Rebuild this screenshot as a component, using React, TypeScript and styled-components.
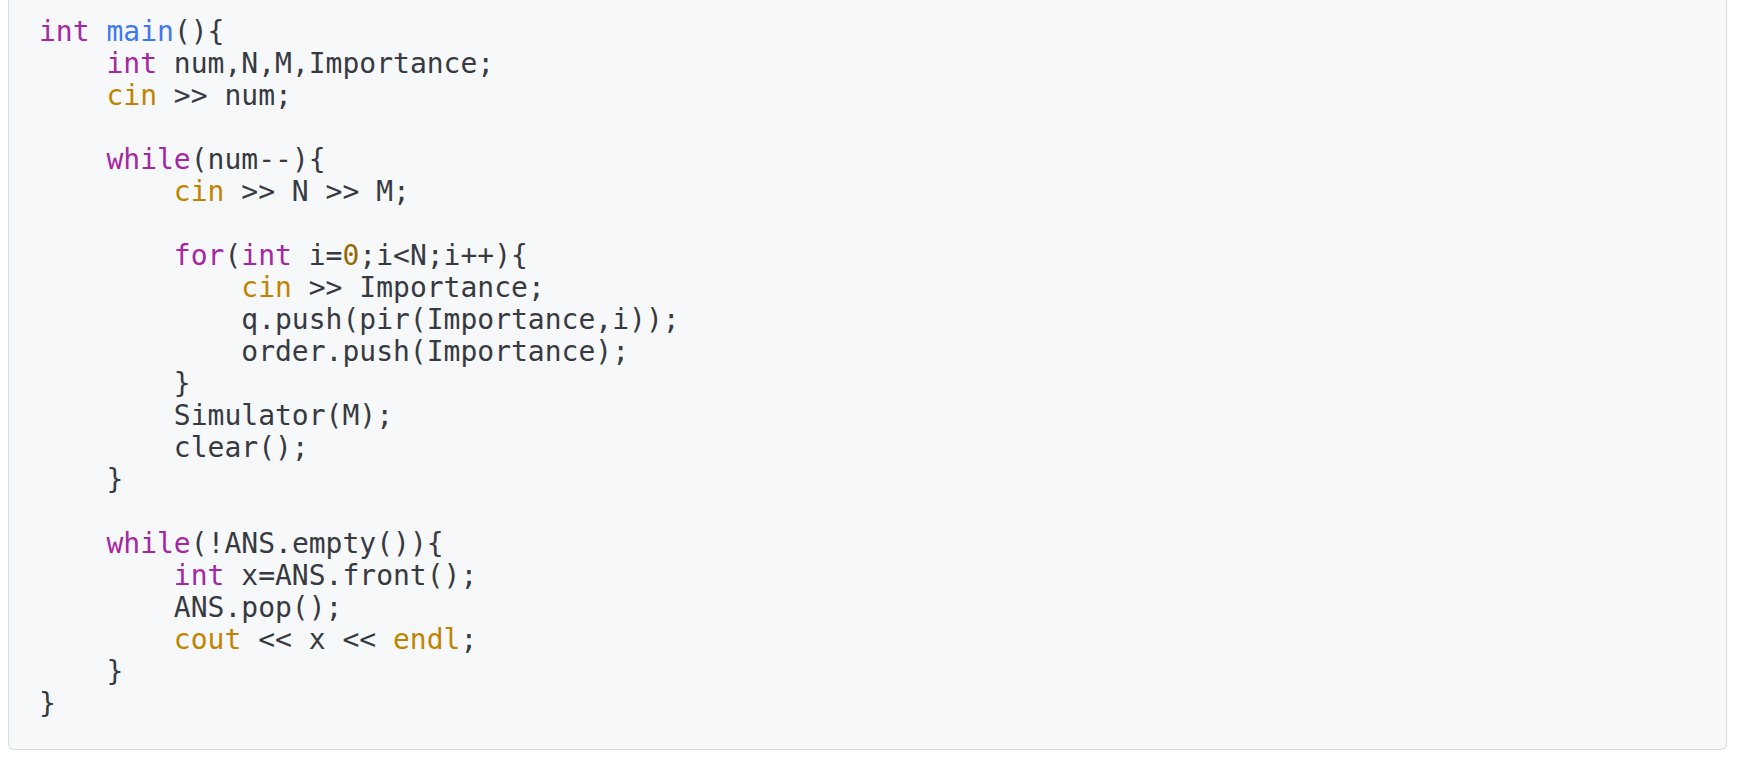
import React from "react";
import styled, { createGlobalStyle } from "styled-components";

const Global = createGlobalStyle`
  html, body {
    margin: 0;
    padding: 0;
    background: #ffffff;
  }
  body {
    padding: 0 13px 0 8px;
  }
`;

const CodeBlock = styled.pre`
  margin: 0;
  padding: 16px 29px 29px 30px;
  background: #f6f8fa;
  border: 1px solid #dcdcdc;
  border-top: none;
  border-radius: 0 0 6px 6px;
  font-family: "DejaVu Sans Mono", "Liberation Mono", monospace;
  font-size: 28px;
  line-height: 32px;
  color: #383a42;
  overflow: hidden;
  white-space: pre;
`;

type Kind = "kw" | "fn" | "bi" | "num";

const colors: Record<Kind, string> = {
  kw: "#a626a4",
  fn: "#4078f2",
  bi: "#c18401",
  num: "#986801",
};

const Tok = styled.span<{ $k: Kind }>`
  color: ${(p) => colors[p.$k]};
`;

const K = ({ children }: { children: React.ReactNode }) => <Tok $k="kw">{children}</Tok>;
const F = ({ children }: { children: React.ReactNode }) => <Tok $k="fn">{children}</Tok>;
const B = ({ children }: { children: React.ReactNode }) => <Tok $k="bi">{children}</Tok>;
const N = ({ children }: { children: React.ReactNode }) => <Tok $k="num">{children}</Tok>;

export default function App() {
  return (
    <>
      <Global />
      <CodeBlock>
        <K>int</K> <F>main</F>(){"{"}
        {"\n    "}<K>int</K> num,N,M,Importance;
        {"\n    "}<B>cin</B> &gt;&gt; num;
        {"\n"}
        {"\n    "}<K>while</K>(num--){"{"}
        {"\n        "}<B>cin</B> &gt;&gt; N &gt;&gt; M;
        {"\n"}
        {"\n        "}<K>for</K>(<K>int</K> i=<N>0</N>;i&lt;N;i++){"{"}
        {"\n            "}<B>cin</B> &gt;&gt; Importance;
        {"\n            "}q.push(pir(Importance,i));
        {"\n            "}order.push(Importance);
        {"\n        "}{"}"}
        {"\n        "}Simulator(M);
        {"\n        "}clear();
        {"\n    "}{"}"}
        {"\n"}
        {"\n    "}<K>while</K>(!ANS.empty()){"{"}
        {"\n        "}<K>int</K> x=ANS.front();
        {"\n        "}ANS.pop();
        {"\n        "}<B>cout</B> &lt;&lt; x &lt;&lt; <B>endl</B>;
        {"\n    "}{"}"}
        {"\n"}{"}"}
      </CodeBlock>
    </>
  );
}
